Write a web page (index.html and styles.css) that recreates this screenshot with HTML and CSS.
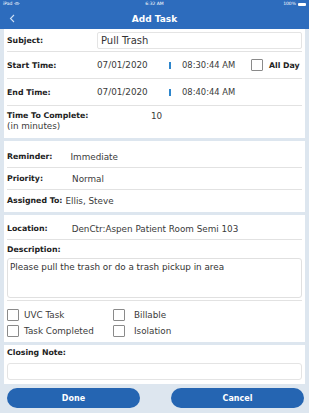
FILE: index.html
```html
<!DOCTYPE html>
<html lang="en">
<head>
    <meta charset="UTF-8">
    <meta name="viewport" content="width=device-width, initial-scale=1.0">
    <title>Add Task</title>
    <link rel="stylesheet" href="styles.css">
</head>
<body>

<header>
    <div class="status">
        <span class="status-left">iPad <svg width="6" height="4" viewBox="0 0 6 4"><path d="M0.5 1.5 Q3 -0.5 5.5 1.5 M1.5 2.5 Q3 1.3 4.5 2.5" stroke="#fff" stroke-width="0.7" fill="none"/></svg></span>
        <span class="status-time">6:32 AM</span>
        <span class="status-right">100% <span class="battery"></span></span>
    </div>
    <div class="nav">
        <svg class="back" width="6" height="9" viewBox="0 0 6 9"><path d="M5 1 L1.5 4.5 L5 8" stroke="#cfe0f5" stroke-width="1.1" fill="none"/></svg>
        <h1>Add Task</h1>
    </div>
</header>

<main>
    <section class="panel first">
        <div class="row subject-row">
            <label>Subject:</label>
            <div class="field">Pull Trash</div>
        </div>
        <div class="row time-row">
            <label>Start Time:</label>
            <span class="date">07/01/2020</span>
            <span class="bar"></span>
            <span class="time">08:30:44 AM</span>
            <span class="check-wrap"><span class="box"></span><b>All Day</b></span>
        </div>
        <div class="row time-row">
            <label>End Time:</label>
            <span class="date">07/01/2020</span>
            <span class="bar"></span>
            <span class="time">08:40:44 AM</span>
        </div>
        <div class="row complete-row">
            <div class="complete-label">
                <label>Time To Complete:</label>
                <span>(in minutes)</span>
            </div>
            <span class="minutes">10</span>
        </div>
    </section>

    <section class="panel second">
        <div class="row info-row">
            <label>Reminder:</label>
            <span class="val reminder">Immediate</span>
        </div>
        <div class="row info-row">
            <label>Priority:</label>
            <span class="val priority">Normal</span>
        </div>
        <div class="row info-row last">
            <label>Assigned To:</label>
            <span class="val assigned">Ellis, Steve</span>
        </div>
    </section>

    <section class="panel third">
        <div class="row location-row">
            <label>Location:</label>
            <span class="val location">DenCtr:Aspen Patient Room Semi 103</span>
        </div>
        <div class="desc">
            <label>Description:</label>
            <div class="textarea">Please pull the trash or do a trash pickup in area</div>
        </div>
        <div class="checks">
            <span class="check"><span class="box"></span>UVC Task</span>
            <span class="check"><span class="box"></span>Billable</span>
            <span class="check"><span class="box"></span>Task Completed</span>
            <span class="check"><span class="box"></span>Isolation</span>
        </div>
    </section>

    <section class="panel fourth">
        <label>Closing Note:</label>
        <div class="note-input"></div>
    </section>

    <div class="buttons">
        <button>Done</button>
        <button>Cancel</button>
    </div>
</main>

</body>
</html>
```

FILE: styles.css
```css
body {
    margin: 0;
    font-family: "DejaVu Sans", sans-serif;
    font-size: 8.8px;
    color: #3a3a3a;
    background-color: #dde6ef;
}

header {
    background: #2d6cbd;
    color: white;
    height: 29px;
}

.status {
    display: flex;
    justify-content: space-between;
    align-items: center;
    height: 8px;
    padding: 0 3px;
    font-size: 4.5px;
    line-height: 8px;
}

.status-left, .status-right {
    display: flex;
    align-items: center;
    gap: 2px;
    width: 40px;
}

.status-right {
    justify-content: flex-end;
}

.battery {
    display: inline-block;
    width: 8px;
    height: 3px;
    background: white;
    border-radius: 1px;
}

.nav {
    position: relative;
    height: 21px;
    display: flex;
    align-items: center;
    justify-content: center;
}

.nav .back {
    position: absolute;
    left: 9px;
    top: 6px;
}

.nav h1 {
    margin: 0;
    font-size: 9px;
    font-weight: bold;
}

main {
    padding: 0 4px;
}

.panel {
    background: white;
    margin-bottom: 3px;
    padding: 0 3px;
}

.panel.first {
    padding-top: 1px;
}

label {
    font-weight: bold;
    color: #222;
    font-size: 7.8px;
}

.row {
    display: flex;
    align-items: center;
    border-bottom: 1px solid #e2e2e2;
}

.subject-row {
    height: 21px;
}

.subject-row label {
    width: 90px;
}

.field {
    flex: 1;
    height: 15px;
    border: 1px solid #e4e4e4;
    border-radius: 2px;
    padding-left: 3px;
    line-height: 15px;
    font-size: 10px;
    color: #333;
}

.time-row {
    height: 26px;
}

.time-row label {
    width: 90px;
}

.date {
    width: 72px;
}

.bar {
    width: 2px;
    height: 7px;
    background: #2e86cc;
    margin-right: 11px;
}

.time {
    width: 69px;
    font-size: 8.4px;
}

.check-wrap {
    display: flex;
    align-items: center;
    gap: 6px;
}

.check-wrap b {
    color: #222;
    font-size: 7.8px;
}

.box {
    display: inline-block;
    width: 10px;
    height: 10px;
    border: 1px solid #8a8a8a;
    border-radius: 1px;
}

.complete-row {
    height: 32px;
    align-items: flex-start;
    padding-top: 5px;
    box-sizing: border-box;
    border-bottom: none;
}

.complete-label {
    display: flex;
    flex-direction: column;
    width: 144px;
    line-height: 10px;
}

.second {
    padding-top: 5px;
    padding-bottom: 1px;
}

.info-row {
    height: 21px;
}

.info-row.last {
    border-bottom: none;
}

.reminder {
    margin-left: 18px;
}

.priority {
    margin-left: 29px;
}

.assigned {
    margin-left: 3px;
}

.third {
    padding-top: 3px;
    padding-bottom: 3px;
}

.location-row {
    height: 21px;
}

.location {
    margin-left: 24px;
}

.desc {
    padding-top: 4px;
    padding-bottom: 2px;
    border-bottom: 1px solid #e2e2e2;
}

.desc label {
    display: block;
    line-height: 12px;
    margin-bottom: 2px;
}

.textarea {
    box-sizing: border-box;
    height: 40px;
    border: 1px solid #e0e0e0;
    border-radius: 3px;
    padding: 3px 2px;
    line-height: 11px;
    color: #333;
}

.checks {
    display: grid;
    grid-template-columns: 106px 1fr;
    grid-auto-rows: 16px;
    padding-top: 6px;
}

.check {
    display: flex;
    align-items: center;
    gap: 5px;
}

.check:nth-child(2n) {
    gap: 9px;
}

.fourth {
    padding-top: 2px;
    padding-bottom: 4px;
}

.fourth label {
    display: block;
    line-height: 12px;
    margin-bottom: 4px;
}

.note-input {
    box-sizing: border-box;
    height: 17px;
    border: 1px solid #e4e4e4;
    border-radius: 3px;
}

.buttons {
    display: flex;
    justify-content: space-between;
    padding: 1px 1px 0 3px;
}

button {
    width: 133px;
    height: 20px;
    border: none;
    border-radius: 10px;
    background: #2565b2;
    color: white;
    font-family: "DejaVu Sans", sans-serif;
    font-size: 8px;
    font-weight: bold;
    cursor: pointer;
}
```
